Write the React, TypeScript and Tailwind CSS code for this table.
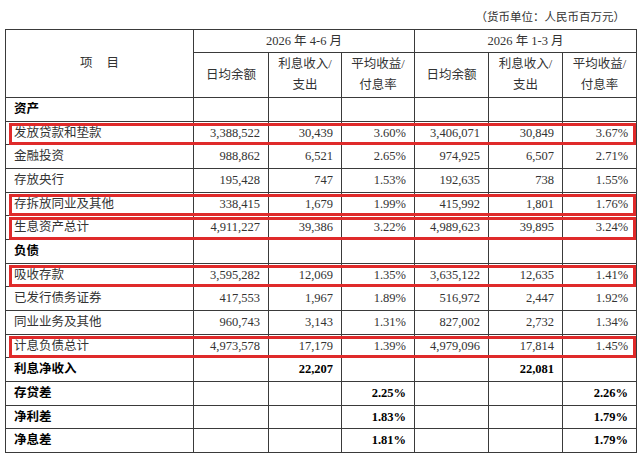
import React from 'react';

type Row = {
  label: string;
  values: string[];
  bold?: boolean;
  boxed?: boolean;
};

const rows: Row[] = [
  { label: '资产', values: ['', '', '', '', '', ''], bold: true },
  { label: '发放贷款和垫款', values: ['3,388,522', '30,439', '3.60%', '3,406,071', '30,849', '3.67%'], boxed: true },
  { label: '金融投资', values: ['988,862', '6,521', '2.65%', '974,925', '6,507', '2.71%'] },
  { label: '存放央行', values: ['195,428', '747', '1.53%', '192,635', '738', '1.55%'] },
  { label: '存拆放同业及其他', values: ['338,415', '1,679', '1.99%', '415,992', '1,801', '1.76%'], boxed: true },
  { label: '生息资产总计', values: ['4,911,227', '39,386', '3.22%', '4,989,623', '39,895', '3.24%'], boxed: true },
  { label: '负债', values: ['', '', '', '', '', ''], bold: true },
  { label: '吸收存款', values: ['3,595,282', '12,069', '1.35%', '3,635,122', '12,635', '1.41%'], boxed: true },
  { label: '已发行债务证券', values: ['417,553', '1,967', '1.89%', '516,972', '2,447', '1.92%'] },
  { label: '同业业务及其他', values: ['960,743', '3,143', '1.31%', '827,002', '2,732', '1.34%'] },
  { label: '计息负债总计', values: ['4,973,578', '17,179', '1.39%', '4,979,096', '17,814', '1.45%'], boxed: true },
  { label: '利息净收入', values: ['', '22,207', '', '', '22,081', ''], bold: true },
  { label: '存贷差', values: ['', '', '2.25%', '', '', '2.26%'], bold: true },
  { label: '净利差', values: ['', '', '1.83%', '', '', '1.79%'], bold: true },
  { label: '净息差', values: ['', '', '1.81%', '', '', '1.79%'], bold: true },
];

const cell = 'border border-[#3a3a3a] p-0';

export default function App() {
  return (
    <div className="w-[640px] h-[459px] bg-white font-['Liberation_Serif','Noto_Sans_CJK_SC',serif] text-[#333] overflow-hidden">
      <div className="h-[29px] flex items-center justify-end pr-[15px] pt-[6px] text-[11.5px] text-[#333]">
        （货币单位：人民币百万元）
      </div>
      <table className="ml-[5px] table-fixed border-collapse w-[632px] text-[12.5px]">
        <colgroup>
          <col className="w-[188px]" />
          <col className="w-[75px]" />
          <col className="w-[73px]" />
          <col className="w-[73px]" />
          <col className="w-[74px]" />
          <col className="w-[74px]" />
          <col className="w-[74px]" />
        </colgroup>
        <thead>
          <tr className="h-[23px]">
            <th rowSpan={2} className={`${cell} font-normal text-center`}>
              项<span className="inline-block w-[14px]" />目
            </th>
            <th colSpan={3} className={`${cell} font-normal text-center`}>
              2026 年 4-6 月
            </th>
            <th colSpan={3} className={`${cell} font-normal text-center`}>
              2026 年 1-3 月
            </th>
          </tr>
          <tr className="h-[45px]">
            {[0, 1].map((k) => (
              <React.Fragment key={k}>
                <th className={`${cell} font-normal text-center`}>日均余额</th>
                <th className={`${cell} font-normal text-center leading-[21px]`}>
                  利息收入/
                  <br />
                  支出
                </th>
                <th className={`${cell} font-normal text-center leading-[21px]`}>
                  平均收益/
                  <br />
                  付息率
                </th>
              </React.Fragment>
            ))}
          </tr>
        </thead>
        <tbody>
          {rows.map((r) => (
            <tr key={r.label} className="h-[23.67px]">
              <td className={`${cell} relative pl-[8px] leading-none ${r.bold ? 'font-bold text-black' : ''}`}>
                {r.label}
                {r.boxed && (
                  <div className="absolute left-[3px] top-[1px] -bottom-[1px] w-[627px] border-[3px] border-[#df2a2a] pointer-events-none" />
                )}
              </td>
              {r.values.map((v, i) => (
                <td
                  key={i}
                  className={`${cell} text-right pr-[8px] leading-none ${r.bold ? 'font-bold text-black' : ''}`}
                >
                  {v}
                </td>
              ))}
            </tr>
          ))}
        </tbody>
      </table>
    </div>
  );
}
